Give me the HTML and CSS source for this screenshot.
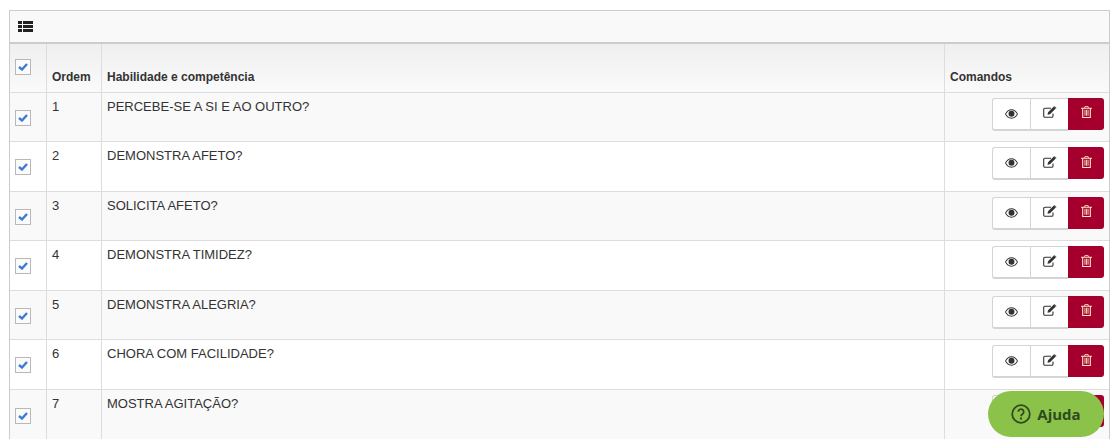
FILE: index.html
```html
<!DOCTYPE html>
<html lang="pt-BR">
<head>
    <meta charset="UTF-8">
    <title>Habilidades e competências</title>
    <link rel="stylesheet" href="styles.css">
</head>
<body>
    <svg class="icon-defs" width="0" height="0" aria-hidden="true">
        <symbol id="i-eye" viewBox="0 0 14 10">
            <path fill="currentColor" fill-rule="evenodd" d="M7 0C4 0 1.6 1.9 0 5c1.6 3.100 4 5 7 5s5.400-1.900 7-5C12.400 1.900 10 0 7 0zM7 1c2.500 0 4.500 1.500 5.900 4C11.500 7.500 9.500 9 7 9S2.500 7.500 1.100 5C2.500 2.500 4.500 1 7 1z"/>
            <circle fill="currentColor" cx="7" cy="4.800" r="3.200"/>
        </symbol>
        <symbol id="i-edit" viewBox="0 0 14 12">
            <path fill="none" stroke="currentColor" stroke-width="1.100" d="M10 7.500V10a1.300 1.300 0 0 1-1.300 1.300H2A1.300 1.300 0 0 1 .7 10V3.500A1.300 1.300 0 0 1 2 2.200h6"/>
            <path fill="currentColor" d="M4.500 8.800l.5-2.500L10.800.6l2 2L7 8.300zM11.400 0l2.100 2.100-.4.300-2-2z"/>
        </symbol>
        <symbol id="i-trash" viewBox="0 0 10 11">
            <path fill="currentColor" fill-rule="evenodd" d="M3.500 0h3l.6 1.500H10v1H9V11H1V2.500H0v-1h2.900zM4 .8l-.3.7h2.600L6 .8zM2 2.500V10h6V2.500zM3.200 3.500h.8V9h-.8zM4.600 3.500h.8V9h-.8zM6 3.500h.8V9H6z"/>
        </symbol>
    </svg>

    <div class="panel">
        <div class="panel-head">
            <svg class="list-icon" viewBox="0 0 15 11" width="15" height="11">
                <path fill="currentColor" d="M0 0h4v3H0zM5 0h10v3H5zM0 4h4v3H0zM5 4h10v3H5zM0 8h4v3H0zM5 8h10v3H5z"/>
            </svg>
        </div>
        <table class="grid">
            <thead>
                <tr>
                    <th class="col-check"><span class="check check-head"><svg viewBox="0 0 10 8" width="10" height="8"><path d="M1 4l3 2.500L9 1" /></svg></span></th>
                    <th class="col-order">Ordem</th>
                    <th>Habilidade e competência</th>
                    <th class="col-cmd">Comandos</th>
                </tr>
            </thead>
            <tbody id="rows">
                <tr>
                    <td class="col-check"><span class="check"><svg viewBox="0 0 10 8" width="10" height="8"><path d="M1 4l3 2.500L9 1" /></svg></span></td>
                    <td>1</td>
                    <td>PERCEBE-SE A SI E AO OUTRO?</td>
                    <td class="col-cmd"><div class="btns"><a class="btn"><svg class="eye"><use href="#i-eye"/></svg></a><a class="btn"><svg class="edit"><use href="#i-edit"/></svg></a><a class="btn btn-del"><svg class="trash"><use href="#i-trash"/></svg></a></div></td>
                </tr>
                <tr>
                    <td class="col-check"><span class="check"><svg viewBox="0 0 10 8" width="10" height="8"><path d="M1 4l3 2.500L9 1" /></svg></span></td>
                    <td>2</td>
                    <td>DEMONSTRA AFETO?</td>
                    <td class="col-cmd"><div class="btns"><a class="btn"><svg class="eye"><use href="#i-eye"/></svg></a><a class="btn"><svg class="edit"><use href="#i-edit"/></svg></a><a class="btn btn-del"><svg class="trash"><use href="#i-trash"/></svg></a></div></td>
                </tr>
                <tr>
                    <td class="col-check"><span class="check"><svg viewBox="0 0 10 8" width="10" height="8"><path d="M1 4l3 2.500L9 1" /></svg></span></td>
                    <td>3</td>
                    <td>SOLICITA AFETO?</td>
                    <td class="col-cmd"><div class="btns"><a class="btn"><svg class="eye"><use href="#i-eye"/></svg></a><a class="btn"><svg class="edit"><use href="#i-edit"/></svg></a><a class="btn btn-del"><svg class="trash"><use href="#i-trash"/></svg></a></div></td>
                </tr>
                <tr>
                    <td class="col-check"><span class="check"><svg viewBox="0 0 10 8" width="10" height="8"><path d="M1 4l3 2.500L9 1" /></svg></span></td>
                    <td>4</td>
                    <td>DEMONSTRA TIMIDEZ?</td>
                    <td class="col-cmd"><div class="btns"><a class="btn"><svg class="eye"><use href="#i-eye"/></svg></a><a class="btn"><svg class="edit"><use href="#i-edit"/></svg></a><a class="btn btn-del"><svg class="trash"><use href="#i-trash"/></svg></a></div></td>
                </tr>
                <tr>
                    <td class="col-check"><span class="check"><svg viewBox="0 0 10 8" width="10" height="8"><path d="M1 4l3 2.500L9 1" /></svg></span></td>
                    <td>5</td>
                    <td>DEMONSTRA ALEGRIA?</td>
                    <td class="col-cmd"><div class="btns"><a class="btn"><svg class="eye"><use href="#i-eye"/></svg></a><a class="btn"><svg class="edit"><use href="#i-edit"/></svg></a><a class="btn btn-del"><svg class="trash"><use href="#i-trash"/></svg></a></div></td>
                </tr>
                <tr>
                    <td class="col-check"><span class="check"><svg viewBox="0 0 10 8" width="10" height="8"><path d="M1 4l3 2.500L9 1" /></svg></span></td>
                    <td>6</td>
                    <td>CHORA COM FACILIDADE?</td>
                    <td class="col-cmd"><div class="btns"><a class="btn"><svg class="eye"><use href="#i-eye"/></svg></a><a class="btn"><svg class="edit"><use href="#i-edit"/></svg></a><a class="btn btn-del"><svg class="trash"><use href="#i-trash"/></svg></a></div></td>
                </tr>
                <tr class="row-last">
                    <td class="col-check"><span class="check"><svg viewBox="0 0 10 8" width="10" height="8"><path d="M1 4l3 2.500L9 1" /></svg></span></td>
                    <td>7</td>
                    <td>MOSTRA AGITAÇÃO?</td>
                    <td class="col-cmd"><div class="btns"><a class="btn"><svg class="eye"><use href="#i-eye"/></svg></a><a class="btn"><svg class="edit"><use href="#i-edit"/></svg></a><a class="btn btn-del"><svg class="trash"><use href="#i-trash"/></svg></a></div></td>
                </tr>
            </tbody>
        </table>
    </div>

    <a class="help-btn">
        <svg viewBox="0 0 20 20" width="20" height="20">
            <circle cx="10" cy="10" r="8.800" fill="none" stroke="currentColor" stroke-width="1.800"/>
            <path d="M7.300 7.800a2.700 2.700 0 1 1 4.300 2.200c-1 .7-1.600 1.200-1.600 2.300" fill="none" stroke="currentColor" stroke-width="1.800"/>
            <rect x="9" y="13.500" width="2" height="2" fill="currentColor"/>
        </svg>
        <span>Ajuda</span>
    </a>
</body>
</html>
```

FILE: styles.css
```css
html, body {
    margin: 0;
    padding: 0;
    height: 100%;
    overflow: hidden;
}

body {
    font-family: "Liberation Sans", Arial, sans-serif;
    font-size: 13px;
    color: #333;
    background: #fff;
    padding: 10px 8px 0 9px;
    box-sizing: border-box;
}

.icon-defs {
    display: block;
    height: 0;
}

.panel {
    border: 1px solid #ccc;
    border-bottom: none;
}

.panel-head {
    height: 31px;
    padding: 0 8px;
    display: flex;
    align-items: center;
    background: #f9f9f9;
    border-bottom: 2px solid #ccc;
}

.list-icon {
    display: block;
    color: #222;
    margin-top: -1px;
}

.grid {
    width: 100%;
    border-collapse: collapse;
    table-layout: fixed;
}

.grid th,
.grid td {
    border: 1px solid #ddd;
    padding: 5px;
    text-align: left;
    vertical-align: top;
    line-height: 17px;
}

.grid tr > :first-child {
    border-left: none;
}

.grid tr > :last-child {
    border-right: none;
}

.grid th {
    height: 36.500px;
    font-size: 12px;
    font-weight: bold;
    vertical-align: bottom;
    padding-bottom: 6px;
    background: linear-gradient(#efefef, #fafafa);
}

.grid td {
    height: 38.500px;
}

.grid thead tr th {
    border-top: none;
}

.grid tbody tr:nth-child(odd) td {
    background: #f9f9f9;
}

/* last row runs past the bottom of the window */
.grid .row-last td {
    height: 40px;
    border-bottom: none;
}

.grid .col-check {
    width: 26px;
    vertical-align: middle;
}

.grid .col-order {
    width: 44px;
}

.grid .col-cmd {
    width: 154px;
}

.check {
    width: 14px;
    height: 14px;
    border: 1px solid #b8b8b8;
    background: #fbfbfb;
    margin-top: 2px;
    display: flex;
    align-items: center;
    justify-content: center;
}

.check-head {
    margin-top: -1px;
}

.check svg {
    display: block;
}

.check path {
    fill: none;
    stroke: #3a7bd5;
    stroke-width: 2.400;
}

.btns {
    display: flex;
    justify-content: flex-end;
}

.btn {
    width: 37px;
    height: 30px;
    border: 1px solid #d4d4d4;
    border-bottom: 2px solid #d4d4d4;
    border-right: none;
    background: #fff;
    display: flex;
    align-items: center;
    justify-content: center;
    color: #333;
}

.btn:first-child {
    border-radius: 3px 0 0 3px;
}

.btn-del {
    width: 36px;
    height: 32px;
    border: none;
    background: #a5002d;
    color: #ffe8c8;
    border-radius: 0 3px 3px 0;
}

.eye {
    width: 13px;
    height: 10px;
}

.edit {
    width: 14px;
    height: 12px;
    margin-top: -3px;
}

.trash {
    width: 11px;
    height: 12px;
    margin-top: -3px;
}

/* Floating help button */
.help-btn {
    position: fixed;
    left: 988px;
    top: 391px;
    width: 116px;
    height: 46px;
    border-radius: 23px;
    background: #8bc34a;
    color: #2f4a1e;
    display: flex;
    align-items: center;
    justify-content: center;
    gap: 6px;
    font-family: "Open Sans", sans-serif;
    font-weight: bold;
    font-size: 15px;
}

.help-btn svg {
    display: block;
}
```
